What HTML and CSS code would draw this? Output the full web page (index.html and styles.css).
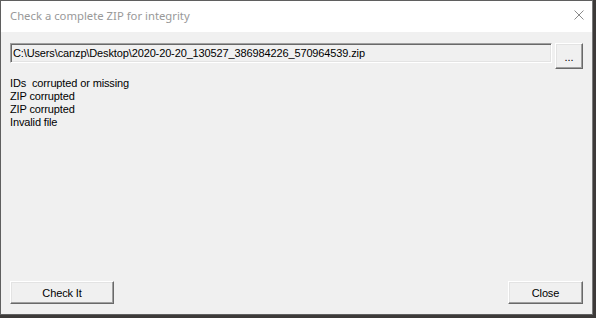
FILE: index.html
```html
<!DOCTYPE html>
<html>
<head>
<meta charset="utf-8">
<link rel="stylesheet" href="styles.css">
</head>
<body>
<div class="window">
  <div class="titlebar">
    <span class="title">Check a complete ZIP for integrity</span>
    <svg class="close-x" width="10" height="10" viewBox="0 0 10 10">
      <path d="M0.5 0.5 L9.5 9.5 M9.5 0.5 L0.5 9.5" stroke="#8a8a8a" stroke-width="1" fill="none"/>
    </svg>
  </div>
  <div class="client">
    <div class="path-row">
      <div class="textbox">C:\Users\canzp\Desktop\2020-20-20_130527_386984226_570964539.zip</div>
      <div class="btn browse">...</div>
    </div>
    <div class="messages">
      <div class="msg">IDs&nbsp; corrupted or missing</div>
      <div class="msg">ZIP corrupted</div>
      <div class="msg">ZIP corrupted</div>
      <div class="msg">Invalid file</div>
    </div>
    <div class="footer">
      <div class="btn check">Check It</div>
      <div class="btn close">Close</div>
    </div>
  </div>
</div>
</body>
</html>
```
FILE: styles.css
```css
html, body {
  margin: 0;
  padding: 0;
}
body {
  width: 596px;
  height: 318px;
  background: #3d3a39;
  overflow: hidden;
  font-family: "Liberation Sans", Arial, sans-serif;
}
.window {
  width: 593px;
  height: 315px;
  box-sizing: border-box;
  border: 1px solid #5f5f5f;
  border-right-color: #7a7a7a;
  display: flex;
  flex-direction: column;
  background: #f0f0f0;
}
.titlebar {
  height: 31px;
  flex: none;
  background: #ffffff;
  display: flex;
  align-items: center;
  justify-content: space-between;
  padding: 0 8px 0 9px;
}
.title {
  font-family: "Noto Sans", "Segoe UI", sans-serif;
  font-size: 11.3px;
  color: #999999;
  margin-top: -3px;
}
.close-x {
  display: block;
  margin-top: -4px;
}
.client {
  flex: 1;
  display: flex;
  flex-direction: column;
  padding: 11px 9px 10px 9px;
  font-size: 11px;
  letter-spacing: -0.13px;
  color: #000;
}
.path-row {
  display: flex;
  align-items: flex-start;
  gap: 3px;
}
.textbox {
  width: 542px;
  height: 20px;
  box-sizing: border-box;
  background: #f0f0f0;
  border: 1px solid;
  border-color: #a0a0a0 #ffffff #ffffff #a0a0a0;
  box-shadow: inset 1px 1px 0 #696969, inset -1px -1px 0 #e3e3e3;
  padding: 3px 0 0 2px;
  line-height: 13px;
  white-space: nowrap;
  overflow: hidden;
}
.btn {
  box-sizing: border-box;
  background: #f0f0f0;
  border: 1px solid;
  border-color: #ffffff #696969 #696969 #ffffff;
  box-shadow: inset -1px -1px 0 #a0a0a0, inset 1px 1px 0 #e3e3e3;
  display: flex;
  align-items: center;
  justify-content: center;
  color: #000;
}
.browse {
  width: 28px;
  height: 26px;
  padding-top: 2px;
}
.messages {
  margin-top: 8px;
  line-height: 13px;
  flex: 1;
}
.footer {
  display: flex;
  justify-content: space-between;
}
.check {
  width: 104px;
  height: 23px;
}
.close {
  width: 75px;
  height: 23px;
}
```
